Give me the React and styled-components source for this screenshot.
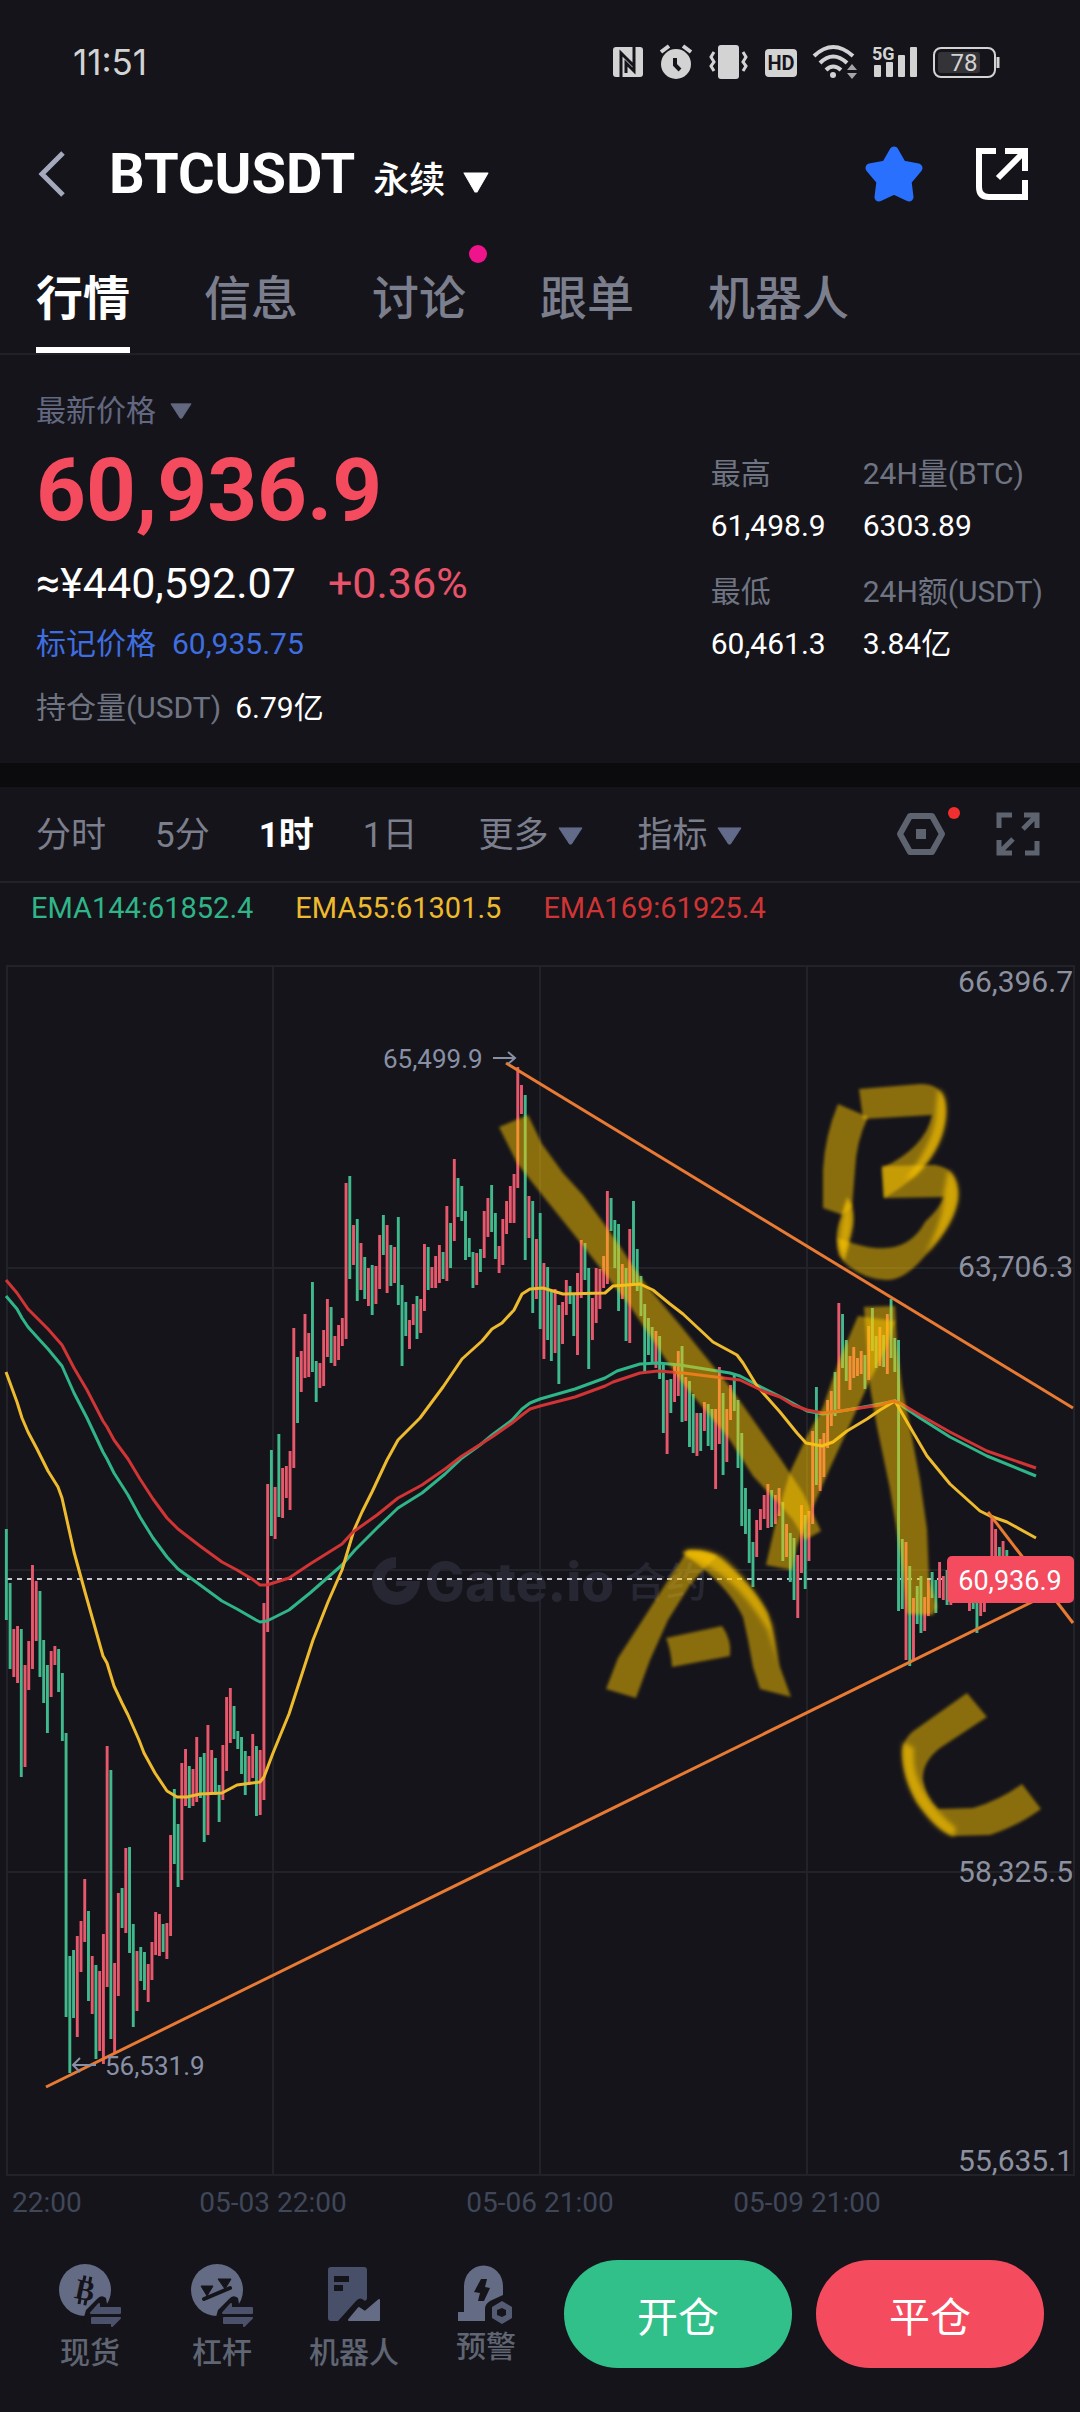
import React, { useState } from "react";
import styled, { createGlobalStyle } from "styled-components";

const GlobalStyle = createGlobalStyle`
  * {
    box-sizing: border-box;
  }

  body {
    margin: 0;
    background: #15141a;
    color: #ffffff;
    font-family: Roboto, "Noto Sans CJK SC", sans-serif;
  }

  button {
    border: none;
    background: none;
    padding: 0;
    color: inherit;
    font: inherit;
    cursor: pointer;
  }

  a {
    color: inherit;
    text-decoration: none;
  }

  svg {
    display: block;
    flex: none;
  }
`;

// Status bar
const StatusBar = styled.div`
  display: flex;
  justify-content: space-between;
  align-items: center;
  height: 124px;
  padding: 0 80px 0 73px;
  color: #d3d3d3;
`;

const Clock = styled.time`
  font-family: Inter, sans-serif;
  font-size: 35px;
`;

const StatusIcons = styled.div`
  display: flex;
  align-items: center;
  gap: 14px;
`;

// Header
const Header = styled.header`
  display: flex;
  align-items: center;
  justify-content: space-between;
  height: 100px;
  padding: 0 51px 0 38px;
`;

const HeaderGroup = styled.div`
  display: flex;
  align-items: center;
  gap: ${(props) => props.$gap}px;
`;

const Title = styled.h1`
  margin: 0;
  font-size: 56px;
  font-weight: 700;
  line-height: 64px;
`;

const PairButton = styled.button`
  display: flex;
  align-items: baseline;
  gap: 18px;
`;

const ContractType = styled.span`
  font-size: 36px;
  font-weight: 500;
`;

// Tabs
const Tabs = styled.nav`
  display: flex;
  gap: 74px;
  padding: 0 36px;
  border-bottom: 2px solid #202126;
`;

const Tab = styled.button`
  position: relative;
  padding: 50px 0 24px;
  border-bottom: 6px solid ${(props) => (props.$active ? "#fff" : "transparent")};
  color: ${(props) => (props.$active ? "#fff" : "#7b7f8d")};
  font-size: 47px;
  font-weight: ${(props) => (props.$active ? 700 : 500)};
  line-height: 49px;
`;

const Dot = styled.span`
  position: absolute;
  border-radius: 50%;
  top: ${(props) => props.$top}px;
  right: ${(props) => props.$right}px;
  width: ${(props) => props.$size}px;
  height: ${(props) => props.$size}px;
  background: ${(props) => props.$color};
`;

// Ticker
const Ticker = styled.section`
  display: flex;
  justify-content: space-between;
  padding: 36px 37px 35px 36px;
  border-bottom: 24px solid #0b0b0d;
  font-size: 30px;
  line-height: 40px;
`;

const TickerMain = styled.div`
  display: flex;
  flex-direction: column;
  align-items: flex-start;
`;

const PriceSelect = styled.button`
  display: flex;
  align-items: center;
  gap: 14px;
  color: #626880;
`;

const LastPrice = styled.strong`
  margin-top: 11px;
  color: #f44b5f;
  font-size: 87px;
  font-weight: 700;
  line-height: 96px;
`;

const Converted = styled.p`
  display: flex;
  gap: 32px;
  margin: 19px 0 15px;
  font-size: 43px;
  line-height: 52px;
`;

const Change = styled.span`
  color: #e8536a;
`;

const MarkPrice = styled.p`
  display: flex;
  gap: 16px;
  margin: 0 0 24px;
  color: #3f6ee0;
`;

const OpenInterest = styled.p`
  display: flex;
  gap: 14px;
  margin: 0;
`;

const Muted = styled.span`
  color: #6f7482;
`;

const Stats = styled.dl`
  display: grid;
  grid-template-columns: auto auto;
  align-content: start;
  gap: 26px 37px;
  margin: 63px 0 0;
`;

const Stat = styled.div`
  display: flex;
  flex-direction: column;
  gap: 12px;

  dt {
    color: #6f7482;
  }

  dd {
    margin: 0;
  }
`;

// Chart
const Toolbar = styled.div`
  display: flex;
  align-items: center;
  justify-content: space-between;
  height: 96px;
  padding: 0 40px 0 36px;
  border-bottom: 2px solid #222329;
`;

const Periods = styled.div`
  display: flex;
  align-items: center;
  gap: 49px;
  padding-top: 4px;
`;

const Period = styled.button`
  display: flex;
  align-items: center;
  gap: 10px;
  color: ${(props) => (props.$active ? "#fff" : "#7b7f8d")};
  font-size: 35px;
  font-weight: ${(props) => (props.$active ? 700 : 400)};
  line-height: 48px;
`;

const MenuGroup = styled.div`
  display: flex;
  gap: 54px;
  margin-left: 12px;
`;

const Tools = styled.div`
  display: flex;
  align-items: center;
  gap: 50px;
`;

const ToolButton = styled.button`
  position: relative;
`;

const Legend = styled.div`
  display: flex;
  align-items: center;
  gap: 42px;
  height: 50px;
  padding: 0 31px;
  font-size: 29px;
`;

const LegendItem = styled.span`
  color: ${(props) => props.$color};
`;

const ChartSvg = styled.svg`
  width: 100%;
  height: auto;
  font-family: Roboto, "Noto Sans CJK SC", sans-serif;
`;

// Bottom bar
const BottomBar = styled.footer`
  display: flex;
  gap: 12px;
  padding: 30px 36px 44px 24px;
`;

const Shortcuts = styled.nav`
  display: flex;
  flex: 528 1 0;
`;

const Shortcut = styled.a`
  display: flex;
  flex: 1;
  flex-direction: column;
  align-items: center;
  gap: ${(props) => (props.$tight ? 2 : 8)}px;
  padding-top: 3px;
  color: #5f6572;
  font-size: 30px;
  font-weight: 500;
  line-height: 32px;
  white-space: nowrap;
`;

const TradeButtons = styled.div`
  display: flex;
  flex: 480 1 0;
  gap: 24px;
`;

const TradeButton = styled.button`
  flex: 1;
  height: 108px;
  border-radius: 54px;
  background: ${(props) => props.$color};
  color: #ffffff;
  font-size: 41px;
`;

const GREEN = "#31c08a";
const RED = "#f44b5f";

// One entry per hour: direction, then the top and bottom of the bar on the plot
const CANDLES = `
g1529-1620 g1583-1669 r1629-1677 r1626-1683 g1629-1777 r1665-1767 r1641-1690 r1565-1669 r1581-1641 g1591-1677
g1640-1703 g1665-1733 r1651-1697 r1646-1665 g1649-1692 g1673-1741 g1733-2017 g1956-2073 g1950-2018 r1936-2037
r1921-1972 r1879-1942 g1911-2001 r1956-2014 g1965-2059 r1971-2051 r1934-2064 r1746-1987 g1770-2039 r1963-2053
r1893-1996 g1888-1928 r1848-1933 g1847-1953 g1924-2027 r1951-2011 g1947-1981 g1952-1990 r1964-2002 r1942-1980
r1912-1955 r1914-1956 g1924-1952 r1923-1959 r1835-1936 g1789-1864 g1824-1887 r1763-1880 r1749-1806 g1766-1808
r1769-1806 r1737-1802 g1757-1798 g1753-1842 r1725-1835 r1750-1793 g1758-1795 g1785-1822 r1745-1800 r1697-1771
r1688-1743 g1706-1739 g1731-1749 g1737-1774 g1751-1795 r1756-1785 r1734-1778 g1746-1816 r1750-1815 r1603-1800
r1484-1632 g1450-1536 r1487-1539 g1434-1517 r1468-1518 r1466-1498 r1451-1510 r1328-1468 g1357-1423 r1351-1392
r1314-1378 r1333-1377 g1282-1372 g1361-1402 r1363-1388 r1330-1386 r1299-1357 g1307-1363 r1336-1366 r1325-1360
r1318-1346 r1183-1339 g1176-1279 r1225-1265 g1219-1301 r1243-1290 g1257-1299 r1268-1306 g1265-1315 r1266-1304
r1235-1289 g1215-1255 r1225-1293 g1245-1286 r1247-1283 g1217-1305 g1285-1366 g1302-1336 r1320-1349 r1304-1325
g1296-1339 r1299-1333 r1244-1311 g1247-1290 r1267-1288 r1256-1288 r1245-1283 g1252-1279 r1206-1281 g1223-1268
r1159-1241 g1178-1217 g1186-1221 g1211-1260 g1238-1257 g1252-1288 r1253-1285 g1249-1272 r1211-1258 r1198-1237
g1185-1232 g1213-1259 r1246-1273 r1219-1265 r1201-1234 r1186-1223 r1174-1223 r1067-1188 r1085-1114 g1095-1260
r1196-1238 g1201-1313 r1239-1299 g1213-1329 r1263-1359 g1267-1340 g1291-1361 r1289-1353 g1305-1384 r1302-1344
r1280-1315 g1286-1304 g1294-1336 r1273-1355 r1240-1298 g1243-1280 g1268-1369 r1298-1340 r1268-1323 r1269-1309
r1256-1288 r1191-1284 g1198-1231 g1220-1268 g1224-1311 r1264-1299 g1268-1341 r1229-1343 g1201-1285 g1249-1291
g1276-1316 g1304-1373 g1318-1355 g1327-1363 r1331-1368 g1336-1379 g1365-1433 r1380-1454 g1379-1413 r1364-1402
r1351-1396 g1346-1422 r1377-1421 g1381-1447 g1394-1453 r1413-1456 g1413-1451 r1402-1431 g1404-1446 g1409-1450
r1409-1489 r1367-1444 g1393-1475 r1409-1462 r1385-1420 g1375-1411 g1400-1468 g1433-1526 g1488-1534 g1509-1563
g1542-1587 r1520-1557 r1509-1530 r1495-1519 r1484-1528 g1490-1527 r1495-1524 r1488-1516 g1502-1561 r1524-1557
g1533-1582 g1538-1600 r1555-1618 r1505-1573 g1515-1589 r1511-1561 r1431-1524 g1387-1485 r1439-1491 r1433-1477
r1400-1448 r1391-1426 g1372-1416 r1303-1409 g1314-1368 g1340-1381 r1356-1390 r1347-1378 r1358-1376 r1351-1374
g1355-1389 r1326-1380 g1308-1351 g1336-1368 r1327-1366 g1335-1367 r1314-1374 g1299-1358 g1338-1372 g1340-1611
g1539-1609 r1542-1660 g1566-1666 r1598-1660 g1586-1624 g1576-1633 r1597-1631 r1580-1616 g1572-1598 g1580-1613
r1562-1598 r1576-1600 g1570-1605 r1575-1605 r1572-1598 g1570-1600 r1572-1600 g1570-1600 r1572-1611 g1574-1609
g1574-1633 r1574-1616 r1570-1612 r1564-1598 r1515-1590 r1529-1590 g1547-1590 r1541-1590 g1550-1590
`
  .trim()
  .split(/\s+/)
  .map((entry) => {
    const [top, bottom] = entry.slice(1).split("-").map(Number);
    return { up: entry[0] === "r", top, bottom };
  });

const EMA_LINES = [
  {
    name: "EMA144",
    value: "61852.4",
    color: "#2fb588",
    points:
      "6,1296 17,1309 22,1318 28,1327 37,1337 48,1349 62,1366 74,1393 87,1418 103,1452 107,1459 114,1473 128,1495 140,1517 153,1538 167,1557 178,1569 192,1579 222,1601 237,1609 256,1620 260,1622 267,1621 289,1610 310,1593 342,1565 355,1550 377,1528 398,1508 422,1493 445,1474 462,1458 480,1445 492,1435 512,1420 522,1409 530,1403 540,1399 575,1389 605,1378 617,1371 640,1364 658,1363 680,1365 730,1373 740,1376 763,1388 787,1400 807,1411 823,1414 847,1410 880,1404 895,1401 920,1418 950,1437 987,1456 1036,1476",
  },
  {
    name: "EMA55",
    value: "61301.5",
    color: "#eeba2e",
    points:
      "6,1372 17,1402 22,1418 28,1432 37,1449 48,1471 58,1487 62,1498 74,1552 85,1592 103,1656 107,1663 114,1686 122,1703 128,1715 139,1740 144,1753 155,1773 167,1791 177,1797 187,1797 200,1794 222,1793 237,1785 260,1782 264,1777 273,1753 289,1714 313,1640 328,1602 342,1570 354,1530 362,1512 372,1492 387,1460 398,1440 420,1418 443,1387 462,1359 482,1341 492,1329 502,1323 514,1310 522,1294 530,1289 543,1288 563,1294 605,1293 613,1286 640,1284 653,1290 670,1304 683,1314 713,1342 737,1355 743,1363 757,1386 780,1412 797,1433 806,1443 822,1446 833,1442 847,1431 867,1419 880,1410 895,1401 910,1427 927,1456 950,1484 980,1511 990,1516 1007,1522 1036,1538",
  },
  {
    name: "EMA169",
    value: "61925.4",
    color: "#d03434",
    points:
      "6,1280 17,1293 28,1309 37,1318 48,1329 62,1345 74,1368 87,1390 103,1421 107,1427 114,1440 128,1459 140,1479 153,1499 167,1518 178,1529 200,1546 222,1562 237,1570 252,1579 260,1585 267,1585 289,1578 310,1564 342,1544 353,1532 377,1515 398,1498 422,1485 445,1469 462,1456 492,1437 512,1423 522,1415 530,1409 540,1406 575,1397 605,1386 613,1382 640,1373 658,1371 683,1373 740,1380 763,1391 780,1397 793,1405 807,1410 823,1413 847,1410 880,1405 893,1401 900,1403 920,1415 950,1432 987,1451 1036,1468",
  },
];

const TREND_LINES = [
  [46, 2087, 1036, 1600],
  [506, 1063, 1073, 1408],
  [988, 1512, 1073, 1623],
];

const GRID_X = [273, 540, 807];
const GRID_Y = [1268, 1570, 1872];

const PRICE_LABELS = [
  [992, "66,396.7"],
  [1277, "63,706.3"],
  [1882, "58,325.5"],
  [2171, "55,635.1"],
];

const TIME_LABELS = [
  [273, "05-03 22:00"],
  [540, "05-06 21:00"],
  [807, "05-09 21:00"],
];

// Highlighter strokes: the three wave legs, then the letters A, B and C
const MARKER_STROKES = [
  "M499 1127L528 1115L542 1144L563 1173L583 1195L613 1236L643 1281L680 1325L730 1387L780 1458L803 1493L821 1531L805 1540L793 1520L780 1505L753 1476L730 1440L680 1380L660 1351L630 1306L580 1242L543 1196L517 1163Z",
  "M766 1565L792 1570L797 1546L807 1521L830 1468L847 1431L867 1387L887 1346L895 1321L858 1316L840 1358L823 1407L807 1436L790 1472L777 1517Z",
  "M864 1307L895 1306L897 1346L902 1387L910 1427L920 1480L927 1529L929 1578L937 1607L933 1615L907 1614L904 1585L900 1550L890 1489L877 1427L870 1387Z",
  "M606 1689L636 1698L650 1660L668 1620L690 1585L705 1568L717 1556L700 1551L688 1550L665 1585L640 1624L618 1658Z",
  "M682 1552Q706 1548 720 1558Q755 1588 768 1613L773 1633L780 1667L791 1697L760 1689L753 1667L748 1640L743 1617Q730 1590 700 1566Z",
  "M666 1638L722 1626Q732 1640 730 1656L672 1667Q671 1650 666 1638Z",
  "M838 1104L868 1117Q856 1142 855 1170L852 1207L843 1215L823 1208L823 1170Q825 1135 838 1104Z",
  "M847 1197Q855 1207 853 1225L845 1260L839 1256Q833 1235 842 1215Z",
  "M859 1089L920 1084Q946 1083 946 1112Q943 1165 884 1198L882 1168Q925 1148 932 1115L863 1119Z",
  "M882 1166L935 1165Q958 1168 958 1195Q957 1222 925 1256Q905 1280 887 1280Q860 1279 842 1260L838 1238L852 1243Q905 1260 925 1222Q940 1208 944 1197L884 1198Z",
  "M967 1693L987 1717L940 1748Q922 1762 923 1780Q926 1798 938 1809L973 1808Q1000 1800 1022 1784L1041 1809Q1018 1826 990 1835L952 1836Q937 1830 917 1803Q902 1775 902 1752Q903 1740 912 1732Z",
];

// Places where the pen turned and the ink is denser
const MARKER_FOLDS = [
  "M686 1550Q712 1547 728 1562Q758 1590 772 1625L778 1662L768 1630Q750 1600 730 1582Q710 1564 684 1555Z",
  "M938 1089Q948 1094 946 1118Q943 1148 915 1176L905 1180Q936 1140 936 1110Z",
  "M948 1170Q960 1180 958 1200Q952 1228 925 1254Q944 1220 944 1192Z",
  "M848 1200Q854 1210 851 1232L844 1256L839 1246Q840 1220 848 1200Z",
  "M903 1742Q900 1780 921 1808Q938 1832 954 1836L956 1828Q935 1812 922 1788Q912 1770 914 1748Z",
];

function Triangle({ width, height, color }) {
  return (
    <svg width={width} height={height} viewBox="0 0 26 20" preserveAspectRatio="none">
      <path d="M1 1H25L14 19H12Z" fill={color} stroke={color} strokeWidth="1" strokeLinejoin="round" />
    </svg>
  );
}

function StatusIconSet() {
  return (
    <StatusIcons>
      <svg width="30" height="34" fill="currentColor">
        <rect y="2" width="30" height="30" rx="3" />
        <path d="M8 32V8L21 21V6M21 2V26L13 18V28" fill="none" stroke="#15141a" strokeWidth="3" />
      </svg>
      <svg width="37" height="36" fill="currentColor">
        <circle cx="19" cy="20" r="15" />
        <path d="M4 8L12 2M34 8L26 2" stroke="currentColor" strokeWidth="4" />
        <path d="M18 14V21L23 26" fill="none" stroke="#15141a" strokeWidth="4" />
      </svg>
      <svg width="42" height="36" fill="currentColor">
        <rect x="10" y="1" width="21" height="34" rx="3" />
        <path
          d="M6 8L3 13L6 18L3 22L6 27M35 8L38 13L35 18L38 22L35 27"
          fill="none"
          stroke="currentColor"
          strokeWidth="3"
        />
      </svg>
      <svg width="34" height="36">
        <rect x="1" y="5" width="32" height="28" rx="4" fill="currentColor" />
        <text x="17" y="26" textAnchor="middle" fontSize="20" fontWeight="700" fontFamily="Roboto, sans-serif" fill="#15141a">
          HD
        </text>
      </svg>
      <svg width="45" height="36" fill="none" stroke="currentColor" strokeWidth="4">
        <path d="M2 12Q21 -6 41 12M8 19Q21 6 35 19M14 26Q21 19 29 26" />
        <circle cx="21" cy="31" r="3" fill="currentColor" stroke="none" />
        <path d="M35 26L40 20L45 26ZM35 29L40 35L45 29Z" fill="#a5a5a8" stroke="none" />
      </svg>
      <svg width="47" height="42" fill="currentColor">
        <text x="1" y="19" fontSize="18" fontWeight="700" fontFamily="Roboto, sans-serif">
          5G
        </text>
        <rect x="3" y="24" width="7" height="12" rx="1" />
        <rect x="15" y="21" width="7" height="15" rx="1" />
        <rect x="27" y="14" width="7" height="22" rx="1" />
        <rect x="39" y="6" width="7" height="30" rx="1" />
      </svg>
      <svg width="68" height="36">
        <rect x="2" y="4" width="61" height="29" rx="7" fill="none" stroke="currentColor" strokeWidth="2" />
        <rect x="6" y="8" width="42" height="21" rx="3" fill="#343438" />
        <path d="M66 13V24" stroke="currentColor" strokeWidth="3" />
        <text x="32" y="27" textAnchor="middle" fontSize="24" fontFamily="Roboto, sans-serif" fill="currentColor">
          78
        </text>
      </svg>
    </StatusIcons>
  );
}

function SwapArrows() {
  return (
    <>
      <path d="M26 54L28 47L39 36Q43 31 48 35L49 41H64V66H27Z" fill="#15141a" />
      <path
        d="M33 50L41 41V45H62V50ZM34 55H62L54 63V60H34Z"
        fill="#4c526b"
        stroke="#4c526b"
        strokeWidth="2"
        strokeLinejoin="round"
      />
    </>
  );
}

function SpotIcon() {
  return (
    <svg width="64" height="66">
      <circle cx="27" cy="27" r="26" fill="#646b85" />
      <g transform="rotate(12 27 27)">
        <text x="27" y="37" textAnchor="middle" fontSize="29" fontWeight="700" fontFamily="Liberation Serif, serif" fill="#15141a">
          B
        </text>
        <path d="M24 13V19M30 13V19M24 36V42M30 36V42" stroke="#15141a" strokeWidth="3" />
      </g>
      <SwapArrows />
    </svg>
  );
}

function MarginIcon() {
  return (
    <svg width="64" height="66">
      <circle cx="27" cy="27" r="26" fill="#646b85" />
      <path d="M11 23H23L17 33ZM28 16H41L35 26Z" fill="#15141a" stroke="#15141a" strokeLinejoin="round" />
      <path d="M14 36L40 25" stroke="#15141a" strokeWidth="4" strokeLinecap="round" />
      <SwapArrows />
    </svg>
  );
}

function BotIcon() {
  return (
    <svg width="64" height="66">
      <path d="M9 4H42Q45 4 45 7V36L43 38Q38 33 34 38L16 58H9Q6 58 6 55V7Q6 4 9 4Z" fill="#485069" />
      <path d="M12 13H27V19H12ZM12 22H21V28H12Z" fill="#15141a" />
      <path
        d="M27 57L37 45L43 49L57 37V57Z"
        fill="#646c86"
        stroke="#646c86"
        strokeWidth="2"
        strokeLinejoin="round"
      />
    </svg>
  );
}

function AlertIcon() {
  return (
    <svg width="64" height="66">
      <path d="M10 49V23A19 20 0 0 1 49 23V32L36 38Q31 41 31 46V58H4V49Z" fill="#646b85" />
      <path d="M27 16H33L31 24L36 25L30 38H24L26 30L20 29Z" fill="#15141a" />
      <path
        d="M48 38L58 44V55L48 61L38 55V44ZM48 45L43 47V52L48 54L52 52V47Z"
        fill="#555b73"
        fillRule="evenodd"
      />
    </svg>
  );
}

function PriceChart() {
  return (
    <ChartSvg viewBox="0 933 1080 1297" role="img" aria-label="BTCUSDT 1时">
      <defs>
        <filter id="ink" x="-10%" y="-10%" width="120%" height="120%">
          <feGaussianBlur stdDeviation="1.8" />
        </filter>
        <filter id="fold" x="-30%" y="-30%" width="160%" height="160%">
          <feGaussianBlur stdDeviation="2.6" />
        </filter>
      </defs>

      <g fill="none" stroke="#222329" strokeWidth="2">
        <rect x="7" y="966" width="1067" height="1209" />
        {GRID_X.map((x) => (
          <path key={x} d={`M${x} 966V2175`} />
        ))}
        {GRID_Y.map((y) => (
          <path key={y} d={`M7 ${y}H1074`} />
        ))}
      </g>

      {/* Watermark */}
      <g fill="#262732">
        <path d="M396 1557A24 24 0 1 0 420 1581H396V1586H407A12 12 0 1 1 396 1568Z" />
        <text x="425" y="1601" fontSize="53" fontWeight="800" fontFamily="Inter, sans-serif">
          Gate.io
        </text>
        <text x="625" y="1597" fontSize="41" fontWeight="500">
          合约
        </text>
      </g>

      <path d="M7 1579H947" stroke="#c4c6cf" strokeWidth="1.8" strokeDasharray="5 5" />

      {CANDLES.map((candle, index) => (
        <rect
          key={index}
          x={4.9 + index * 3.733}
          y={candle.top}
          width="2.9"
          height={candle.bottom - candle.top}
          fill={candle.up ? "#e8586c" : "#40b98c"}
        />
      ))}

      {EMA_LINES.map((line) => (
        <polyline
          key={line.name}
          points={line.points}
          fill="none"
          stroke={line.color}
          strokeWidth="3"
          strokeLinejoin="round"
        />
      ))}

      {TREND_LINES.map(([x1, y1, x2, y2]) => (
        <line key={y1} x1={x1} y1={y1} x2={x2} y2={y2} stroke="#e87a34" strokeWidth="3" />
      ))}

      <g fontSize="26" fill="#8890a6">
        <text x="383" y="1068">65,499.9</text>
        <text x="105" y="2075">56,531.9</text>
        <path
          d="M493 1058H515M508 1052L515 1058L508 1064M96 2065H73M80 2058L73 2065L80 2072"
          fill="none"
          stroke="#8890a6"
          strokeWidth="2"
        />
      </g>

      <g fontSize="30" fill="#8c91a0" textAnchor="end">
        {PRICE_LABELS.map(([y, label]) => (
          <text key={label} x="1073" y={y}>
            {label}
          </text>
        ))}
      </g>

      <g fontSize="28" fill="#3f4759">
        <text x="12" y="2212">
          22:00
        </text>
        {TIME_LABELS.map(([x, label]) => (
          <text key={label} x={x} y="2212" textAnchor="middle">
            {label}
          </text>
        ))}
      </g>

      <rect x="947" y="1556" width="127" height="47" rx="5" fill={RED} />
      <text x="1010" y="1590" fontSize="27" textAnchor="middle" fill="#ffffff">
        60,936.9
      </text>

      {MARKER_STROKES.map((d) => (
        <path key={d} d={d} fill="#ffc800" fillOpacity="0.5" filter="url(#ink)" />
      ))}
      {MARKER_FOLDS.map((d) => (
        <path key={d} d={d} fill="#ffc800" fillOpacity="0.6" filter="url(#fold)" />
      ))}
    </ChartSvg>
  );
}

const tabs = ["行情", "信息", "讨论", "跟单", "机器人"];
const periods = ["分时", "5分", "1时", "1日"];

const stats = [
  { label: "最高", value: "61,498.9" },
  { label: "24H量(BTC)", value: "6303.89" },
  { label: "最低", value: "60,461.3" },
  { label: "24H额(USDT)", value: "3.84亿" },
];

export default function App() {
  const [activeTab, setActiveTab] = useState("行情");
  const [activePeriod, setActivePeriod] = useState("1时");

  return (
    <>
      <GlobalStyle />
      <StatusBar>
        <Clock>11:51</Clock>
        <StatusIconSet />
      </StatusBar>

      <Header>
        <HeaderGroup $gap={43}>
          <button type="button" aria-label="返回">
            <svg width="28" height="46" fill="none" stroke="#a4aabb" strokeWidth="5">
              <path d="M25 2L4 23L25 44" />
            </svg>
          </button>
          <PairButton type="button" aria-haspopup="listbox">
            <Title>BTCUSDT</Title>
            <ContractType>永续</ContractType>
            <Triangle width={26} height={21} color="#fff" />
          </PairButton>
        </HeaderGroup>
        <HeaderGroup $gap={52}>
          <button type="button" aria-label="收藏">
            <svg width="58" height="56" viewBox="0 0 58 56">
              <path
                d="M29 5L37 19L53 22L42 35L44 51L29 44L14 51L16 35L5 22L21 19Z"
                fill="#2970ff"
                stroke="#2970ff"
                strokeWidth="9"
                strokeLinejoin="round"
              />
            </svg>
          </button>
          <button type="button" aria-label="分享">
            <svg width="54" height="54" fill="none" stroke="#fff" strokeWidth="6">
              <path d="M21 4H4V40Q4 50 14 50H50V33" />
              <path d="M30 4H50V24M49 5L23 31" />
            </svg>
          </button>
        </HeaderGroup>
      </Header>

      <Tabs>
        {tabs.map((tab) => (
          <Tab key={tab} type="button" $active={tab === activeTab} onClick={() => setActiveTab(tab)}>
            {tab}
            {tab === "讨论" && <Dot $top={21} $right={-21} $size={18} $color="#f0148c" />}
          </Tab>
        ))}
      </Tabs>

      <Ticker>
        <TickerMain>
          <PriceSelect type="button" aria-haspopup="listbox">
            最新价格
            <Triangle width={22} height={16} color="#626880" />
          </PriceSelect>
          <LastPrice>60,936.9</LastPrice>
          <Converted>
            ≈¥440,592.07 <Change>+0.36%</Change>
          </Converted>
          <MarkPrice>
            <span>标记价格</span>
            <span>60,935.75</span>
          </MarkPrice>
          <OpenInterest>
            <Muted>持仓量(USDT)</Muted>
            <span>6.79亿</span>
          </OpenInterest>
        </TickerMain>
        <Stats>
          {stats.map((stat) => (
            <Stat key={stat.label}>
              <dt>{stat.label}</dt>
              <dd>{stat.value}</dd>
            </Stat>
          ))}
        </Stats>
      </Ticker>

      <Toolbar>
        <Periods>
          {periods.map((period) => (
            <Period
              key={period}
              type="button"
              $active={period === activePeriod}
              onClick={() => setActivePeriod(period)}
            >
              {period}
            </Period>
          ))}
          <MenuGroup>
            <Period type="button" aria-haspopup="menu">
              更多
              <Triangle width={25} height={18} color="#626c8a" />
            </Period>
            <Period type="button" aria-haspopup="menu">
              指标
              <Triangle width={25} height={18} color="#626c8a" />
            </Period>
          </MenuGroup>
        </Periods>
        <Tools>
          <ToolButton type="button" aria-label="图表设置">
            <svg width="50" height="44" fill="none" stroke="#5e6370" strokeWidth="6">
              <path d="M14 4H36L46 22L36 40H14L4 22Z" strokeLinejoin="round" />
              <rect x="20" y="17" width="10" height="10" fill="#5e6370" stroke="none" />
            </svg>
            <Dot $top={-5} $right={-14} $size={12} $color="#f0302f" />
          </ToolButton>
          <ToolButton type="button" aria-label="全屏">
            <svg width="44" height="44" fill="none" stroke="#5e6370" strokeWidth="5">
              <path d="M3 16V3H16M41 29V41H29" />
              <path d="M28 3H41V16M40 4L27 17M3 28V41H16M4 40L17 27" />
            </svg>
          </ToolButton>
        </Tools>
      </Toolbar>

      <Legend>
        {EMA_LINES.map((line) => (
          <LegendItem key={line.name} $color={line.color}>
            {line.name}:{line.value}
          </LegendItem>
        ))}
      </Legend>

      <PriceChart />

      <BottomBar>
        <Shortcuts>
          <Shortcut href="#spot">
            <SpotIcon />
            现货
          </Shortcut>
          <Shortcut href="#margin">
            <MarginIcon />
            杠杆
          </Shortcut>
          <Shortcut href="#bots">
            <BotIcon />
            机器人
          </Shortcut>
          <Shortcut href="#alerts" $tight>
            <AlertIcon />
            预警
          </Shortcut>
        </Shortcuts>
        <TradeButtons>
          <TradeButton type="button" $color={GREEN}>
            开仓
          </TradeButton>
          <TradeButton type="button" $color={RED}>
            平仓
          </TradeButton>
        </TradeButtons>
      </BottomBar>
    </>
  );
}
